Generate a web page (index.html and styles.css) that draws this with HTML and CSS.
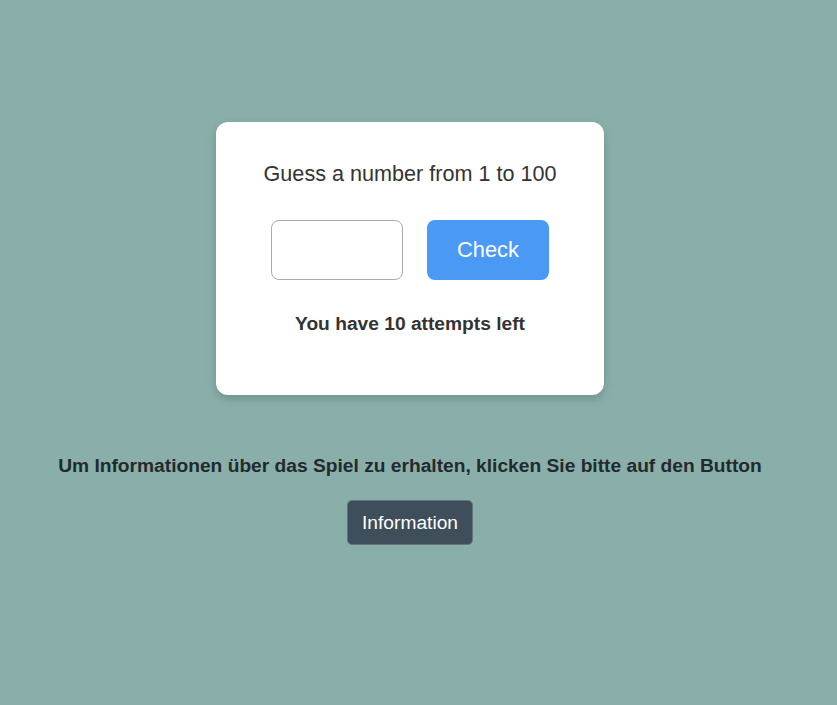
FILE: index.html
```html
<!DOCTYPE html>
<html lang="de">
<head>
<meta charset="utf-8">
<title>Guess a number</title>
<link rel="stylesheet" href="styles.css">
</head>
<body>
<main class="page">
  <section class="card">
    <h1 class="card-title">Guess a number from 1 to 100</h1>
    <div class="guess-row">
      <input class="guess-input" type="text" aria-label="Guess">
      <button class="check-btn" type="button">Check</button>
    </div>
    <p class="attempts">You have 10 attempts left</p>
  </section>
  <p class="info-text">Um Informationen über das Spiel zu erhalten, klicken Sie bitte auf den Button</p>
  <button class="info-btn" type="button">Information</button>
</main>
</body>
</html>
```
FILE: styles.css
```css
html, body {
  margin: 0;
  padding: 0;
  background: #8aafab;
  height: 100%;
}
body {
  font-family: "Liberation Sans", Arial, sans-serif;
  color: #333;
}
.page {
  width: 820px;
  display: flex;
  flex-direction: column;
  align-items: center;
  padding-top: 122px;
}
.card {
  width: 388px;
  box-sizing: border-box;
  background: #fff;
  border-radius: 12px;
  box-shadow: 0 4px 10px rgba(0, 0, 0, 0.18);
  padding: 40px 0 61px;
  display: flex;
  flex-direction: column;
  align-items: center;
}
.card-title {
  margin: 0;
  font-size: 21.6px;
  font-weight: normal;
  line-height: 23px;
  color: #333;
}
.guess-row {
  margin-top: 35px;
  display: flex;
  gap: 24px;
}
.guess-input {
  width: 132px;
  height: 60px;
  box-sizing: border-box;
  border: 1px solid #aaa;
  border-radius: 8px;
  background: #fff;
  font-size: 20px;
  padding: 0 10px;
  margin: 0;
}
.check-btn {
  width: 122px;
  height: 60px;
  border: none;
  border-radius: 8px;
  background: #4a9af5;
  color: #fff;
  font-family: "Liberation Sans", Arial, sans-serif;
  font-size: 21.8px;
  margin: 0;
}
.attempts {
  margin: 33px 0 0;
  font-size: 19.2px;
  font-weight: bold;
  line-height: 21px;
  color: #333;
}
.info-text {
  margin: 60px 0 0;
  font-size: 19.2px;
  font-weight: bold;
  line-height: 21px;
  color: #222a2c;
}
.info-btn {
  margin-top: 24px;
  width: 126px;
  height: 45px;
  border: 1px solid #66737b;
  border-radius: 5px;
  background: #3e4f5b;
  color: #fff;
  font-family: "Liberation Sans", Arial, sans-serif;
  font-size: 19.2px;
}
```
